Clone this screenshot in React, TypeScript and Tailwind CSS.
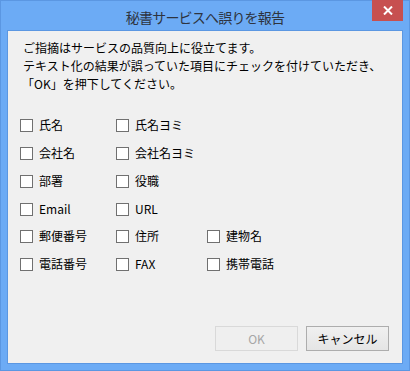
import React from "react";

const font = { fontFamily: '"Noto Sans CJK JP", "Noto Sans", sans-serif' };

function Check({ label }: { label: string }) {
  return (
    <div className="flex items-center h-[28px]">
      <div className="w-[13px] h-[13px] border border-[#707070] bg-white shrink-0" />
      <span className="ml-[6px] text-[12px] leading-[14px] text-black whitespace-nowrap">{label}</span>
    </div>
  );
}

const rows: string[][] = [
  ["氏名", "氏名ヨミ"],
  ["会社名", "会社名ヨミ"],
  ["部署", "役職"],
  ["Email", "URL"],
  ["郵便番号", "住所", "建物名"],
  ["電話番号", "FAX", "携帯電話"],
];

export default function App() {
  return (
    <div style={font} className="w-[410px] h-[371px] bg-[#6cabf5] border border-[#5b97e2] relative flex flex-col">
      <div className="h-[29px] flex items-center justify-center shrink-0">
        <span className="text-[14px] tracking-[-0.8px] text-[#2e3440] pt-[3px]">秘書サービスへ誤りを報告</span>
      </div>
      <div className="absolute top-[-1px] right-[6px] w-[31px] h-[21px] bg-[#c75050] flex items-center justify-center">
        <svg width="10" height="9" viewBox="0 0 10 9">
          <path d="M1 0.5 L9 8.5 M9 0.5 L1 8.5" stroke="white" strokeWidth="2" />
        </svg>
      </div>
      <div className="mx-[6px] h-[334px] border border-[#5b97e2] bg-[#f0f0f0] flex flex-col">
        <div className="pt-[8px] pl-[15px] text-[12px] leading-[18px] text-black whitespace-nowrap">
          <div>ご指摘はサービスの品質向上に役立てます。</div>
          <div>テキスト化の結果が誤っていた項目にチェックを付けていただき、</div>
          <div className="-ml-[1px]">「OK」を押下してください。</div>
        </div>
        <div className="mt-[18px] pl-[12px] flex flex-col">
          {rows.map((r, i) => (
            <div key={i} className={"flex " + (i === 3 ? "h-[27px]" : i === 1 ? "h-[28px]" : "h-[28px]")}>
              <div className="w-[96px]"><Check label={r[0]} /></div>
              <div className="w-[91px]"><Check label={r[1]} /></div>
              {r[2] && <div><Check label={r[2]} /></div>}
            </div>
          ))}
        </div>
        <div className="mt-auto flex justify-end gap-[8px] pr-[13px] pb-[12px]">
          <div className="w-[83px] h-[25px] border border-[#d9d9d9] bg-[#efefef] flex items-center justify-center text-[12px] text-[#a6a6a6]">OK</div>
          <div className="w-[83px] h-[25px] border border-[#adadad] bg-gradient-to-b from-[#f0f0f0] to-[#e5e5e5] flex items-center justify-center text-[12px] text-black">キャンセル</div>
        </div>
      </div>
    </div>
  );
}
